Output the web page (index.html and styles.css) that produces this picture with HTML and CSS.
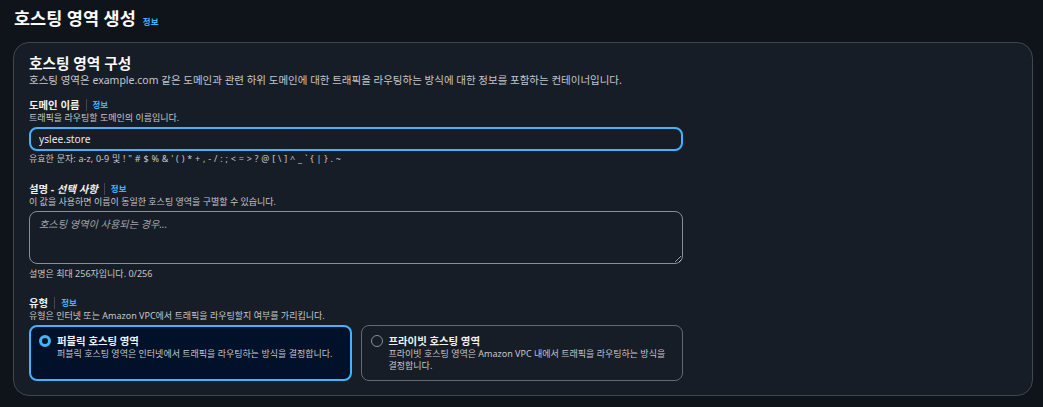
FILE: index.html
```html
<!DOCTYPE html>
<html lang="ko">
<head>
<meta charset="utf-8">
<title>호스팅 영역 생성</title>
<link rel="stylesheet" href="styles.css">
</head>
<body>
<div class="page">
  <div class="page-head">
    <h1 class="page-title">호스팅 영역 생성</h1>
    <a class="info info-title" href="#">정보</a>
  </div>
  <section class="container">
    <h2 class="container-title">호스팅 영역 구성</h2>
    <p class="container-desc">호스팅 영역은 example.com 같은 도메인과 관련 하위 도메인에 대한 트래픽을 라우팅하는 방식에 대한 정보를 포함하는 컨테이너입니다.</p>

    <div class="field field-first">
      <div class="label-row"><span class="label">도메인 이름</span><span class="divider"></span><a class="info" href="#">정보</a></div>
      <div class="hint">트래픽을 라우팅할 도메인의 이름입니다.</div>
      <input class="input focused" type="text" value="yslee.store">
      <div class="constraint wide">유효한 문자: a-z, 0-9 및 ! " # $ % &amp; ' ( ) * + , - / : ; &lt; = &gt; ? @ [ \ ] ^ _ ` { | } . ~</div>
    </div>

    <div class="field">
      <div class="label-row"><span class="label">설명 - <i>선택 사항</i></span><span class="divider"></span><a class="info" href="#">정보</a></div>
      <div class="hint">이 값을 사용하면 이름이 동일한 호스팅 영역을 구별할 수 있습니다.</div>
      <textarea class="textarea" placeholder="호스팅 영역이 사용되는 경우..."></textarea>
      <div class="constraint">설명은 최대 256자입니다. 0/256</div>
    </div>

    <div class="field field-last">
      <div class="label-row"><span class="label">유형</span><span class="divider"></span><a class="info" href="#">정보</a></div>
      <div class="hint">유형은 인터넷 또는 Amazon VPC에서 트래픽을 라우팅할지 여부를 가리킵니다.</div>
      <div class="tiles">
        <div class="tile selected">
          <span class="radio checked"></span>
          <div class="tile-text">
            <div class="tile-title">퍼블릭 호스팅 영역</div>
            <div class="tile-desc">퍼블릭 호스팅 영역은 인터넷에서 트래픽을 라우팅하는 방식을 결정합니다.</div>
          </div>
        </div>
        <div class="tile">
          <span class="radio"></span>
          <div class="tile-text">
            <div class="tile-title">프라이빗 호스팅 영역</div>
            <div class="tile-desc">프라이빗 호스팅 영역은 Amazon VPC 내에서 트래픽을 라우팅하는 방식을 결정합니다.</div>
          </div>
        </div>
      </div>
    </div>
  </section>
</div>
</body>
</html>
```

FILE: styles.css
```css
* { box-sizing: border-box; }
html, body {
  margin: 0;
  padding: 0;
  background: #0f141a;
}
body {
  font-family: "Noto Sans", "Noto Sans CJK KR", sans-serif;
  color: #c6c6cd;
  width: 1043px;
  height: 407px;
  overflow: hidden;
}
.page {
  padding: 6px 10px 0 13px;
}
.page-head {
  display: flex;
  align-items: baseline;
  gap: 7px;
  height: 36px;
  padding-left: 1px;
}
.page-title {
  margin: 0;
  font-size: 17.5px;
  line-height: 24px;
  font-weight: 700;
  color: #fbfbfb;
}
.info {
  color: #42b4ff;
  text-decoration: none;
  font-weight: 700;
  font-size: 8.5px;
  line-height: 12px;
}
.container {
  border: 1px solid #424650;
  border-radius: 16px;
  background: #161d26;
  padding: 11px 16px 14px 15px;
  height: 354px;
}
.container-title {
  margin: 0;
  font-size: 14.7px;
  line-height: 18px;
  font-weight: 700;
  color: #fbfbfb;
}
.container-desc {
  margin: 1px 0 0;
  font-size: 10.5px;
  line-height: 14px;
  color: #c6c6cd;
}
.field {
  width: 654px;
  margin-top: 17px;
}
.field-first { margin-top: 11px; }
.field-last { margin-top: 16px; }
.label-row {
  display: flex;
  align-items: center;
  height: 14px;
}
.label {
  font-size: 10.4px;
  line-height: 14px;
  font-weight: 700;
  color: #f1f1f3;
}
.label i { font-style: italic; }
.divider {
  width: 1px;
  height: 12px;
  background: #424650;
  margin: 0 6px;
}
.hint, .constraint {
  font-size: 9px;
  line-height: 12px;
  color: #c6c6cd;
}
.constraint.wide { word-spacing: 0.5px; }
.hint { margin-bottom: 3px; }
.constraint { margin-top: 2px; }
.textarea + .constraint { margin-top: 4px; }
.input, .textarea {
  display: block;
  width: 654px;
  background: #161d26;
  color: #e9ebed;
  font-family: "Noto Sans", "Noto Sans CJK KR", sans-serif;
  font-size: 10.2px;
  border-radius: 8px;
  outline: none;
  margin: 0;
}
.input {
  height: 24px;
  border: 2px solid #42b4ff;
  padding: 0 8px;
}
.textarea {
  height: 53px;
  border: 1px solid #8c8c94;
  padding: 4px 9px;
  resize: vertical;
}
.textarea::placeholder {
  color: #a4a4ad;
  font-style: italic;
  opacity: 1;
}
.tiles {
  display: grid;
  grid-template-columns: 1fr 1fr;
  gap: 9px;
  margin-top: 1px;
}
.tile {
  display: flex;
  gap: 6px;
  height: 56px;
  border: 1px solid #656871;
  border-radius: 8px;
  padding: 8px 10px 0 9px;
}
.tile.selected {
  border: 2px solid #42b4ff;
  background: #001129;
  padding: 7px 10px 0 8px;
}
.radio {
  flex: none;
  width: 12px;
  height: 12px;
  border-radius: 50%;
  border: 1px solid #8c8c94;
  margin-top: 1px;
}
.radio.checked {
  border: 3.5px solid #42b4ff;
  background: #0f141a;
}
.tile-title {
  font-size: 10.4px;
  line-height: 14px;
  font-weight: 700;
  color: #f1f1f3;
}
.tile-desc {
  font-size: 9px;
  line-height: 12px;
  color: #c6c6cd;
}
```
